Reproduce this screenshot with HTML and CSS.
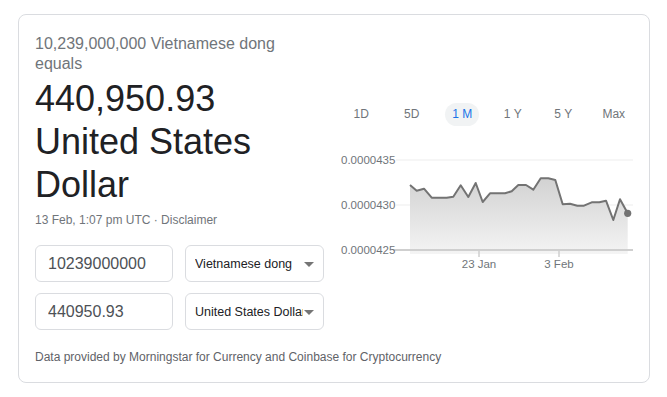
FILE: index.html
```html
<!DOCTYPE html>
<html lang="en">
<head>
    <meta charset="UTF-8">
    <meta name="viewport" content="width=device-width, initial-scale=1.0">
    <title>Currency converter</title>
    <link rel="stylesheet" href="styles.css">
</head>
<body>

    <!-- Karta przelicznika -->
    <div class="card">
        <div class="converter">
            <div class="left">
                <div class="source">10,239,000,000 Vietnamese dong equals</div>
                <div class="result">440,950.93 United States Dollar</div>
                <div class="stamp">13 Feb, 1:07 pm UTC · Disclaimer</div>

                <div class="row">
                    <input class="amount" type="text" value="10239000000">
                    <div class="currency"><span>Vietnamese dong</span></div>
                </div>
                <div class="row">
                    <input class="amount" type="text" value="440950.93">
                    <div class="currency"><span>United States Dollar</span></div>
                </div>
            </div>

            <!-- Wykres -->
            <div class="chart">
                <div class="tabs">
                    <div class="tab"><span>1D</span></div>
                    <div class="tab"><span>5D</span></div>
                    <div class="tab"><span class="active">1 M</span></div>
                    <div class="tab"><span>1 Y</span></div>
                    <div class="tab"><span>5 Y</span></div>
                    <div class="tab"><span>Max</span></div>
                </div>
                <svg class="plot" width="303" height="125" viewBox="336 148 303 125">
                    <defs>
                        <linearGradient id="fill" x1="0" y1="0" x2="0" y2="1">
                            <stop offset="0" stop-color="#d2d2d2"/>
                            <stop offset="1" stop-color="#f4f4f4"/>
                        </linearGradient>
                    </defs>
                    <line x1="396" y1="160" x2="633" y2="160" stroke="#f3f3f3" stroke-width="1.5"/>
                    <line x1="396" y1="205" x2="633" y2="205" stroke="#f3f3f3" stroke-width="1.5"/>
                    <polygon fill="url(#fill)" points="410,185 416.7,190.7 424,188.7 431.7,197.7 446.7,197.7 453.3,196.7 460.7,185.3 468.3,197 475.7,183 482.7,202 490,193.3 505,193.3 511.7,191.3 518.3,185 526,185 533.3,189.7 540.7,178.3 548.3,178.3 555.3,180 562.7,204.3 570,203.7 577.3,205.7 584,205.7 591.7,202.3 599.3,202.3 606,200.7 613.3,220 620,199.3 627.7,213.3 627.7,254 410,254"/>
                    <line x1="393" y1="250" x2="633" y2="250" stroke="#cfcfcf" stroke-width="2"/>
                    <line x1="479" y1="250" x2="479" y2="257" stroke="#cfcfcf" stroke-width="1.5"/>
                    <line x1="559" y1="250" x2="559" y2="257" stroke="#cfcfcf" stroke-width="1.5"/>
                    <polyline fill="none" stroke="#737373" stroke-width="2" stroke-linejoin="round" points="410,185 416.7,190.7 424,188.7 431.7,197.7 446.7,197.7 453.3,196.7 460.7,185.3 468.3,197 475.7,183 482.7,202 490,193.3 505,193.3 511.7,191.3 518.3,185 526,185 533.3,189.7 540.7,178.3 548.3,178.3 555.3,180 562.7,204.3 570,203.7 577.3,205.7 584,205.7 591.7,202.3 599.3,202.3 606,200.7 613.3,220 620,199.3 627.7,213.3"/>
                    <circle cx="627.7" cy="213.3" r="3.6" fill="#737373"/>
                    <text class="axis" x="341" y="164">0.0000435</text>
                    <text class="axis" x="341" y="209">0.0000430</text>
                    <text class="axis" x="341" y="254">0.0000425</text>
                    <text class="axis" x="479" y="268" text-anchor="middle">23 Jan</text>
                    <text class="axis" x="559" y="268" text-anchor="middle">3 Feb</text>
                </svg>
            </div>
        </div>

        <div class="footer">Data provided by Morningstar for Currency and Coinbase for Cryptocurrency</div>
    </div>

</body>
</html>
```

FILE: styles.css
```css
body {
    margin: 0;
    font-family: "Liberation Sans", Arial, sans-serif;
    background-color: #fff;
}

.card {
    box-sizing: border-box;
    width: 632px;
    height: 369px;
    margin: 14px 0 0 18px;
    padding: 19px 16px 0 16px;
    border: 1px solid #dadce0;
    border-radius: 8px;
}

.converter {
    display: flex;
}

.left {
    width: 289px;
}

.source {
    width: 275px;
    font-size: 16px;
    line-height: 20px;
    color: #70757a;
}

.result {
    margin-top: 3px;
    font-size: 36px;
    line-height: 43px;
    color: #202124;
}

.stamp {
    margin-top: 6px;
    font-size: 12px;
    line-height: 16px;
    color: #70757a;
}

.row {
    display: flex;
    gap: 12px;
    margin-top: 11px;
}

.stamp + .row {
    margin-top: 17px;
}

.amount {
    box-sizing: border-box;
    width: 138px;
    height: 37px;
    margin: 0;
    padding: 0 12px;
    border: 1px solid #dadce0;
    border-radius: 6px;
    font-family: inherit;
    font-size: 16px;
    color: #4d5156;
    outline: none;
}

.currency {
    box-sizing: border-box;
    position: relative;
    width: 139px;
    height: 37px;
    padding: 0 20px 0 9px;
    border: 1px solid #dadce0;
    border-radius: 6px;
    display: flex;
    align-items: center;
}

.currency span {
    white-space: nowrap;
    overflow: hidden;
    font-size: 12.5px;
    color: #202124;
}

/* strzałka listy */
.currency::after {
    content: "";
    position: absolute;
    right: 9px;
    top: 16px;
    border-left: 5px solid transparent;
    border-right: 5px solid transparent;
    border-top: 5px solid #757575;
}

.chart {
    width: 303px;
    margin-left: 12px;
}

.tabs {
    display: flex;
    height: 23px;
    margin-top: 69px;
}

.tab {
    flex: 1;
    display: flex;
    justify-content: center;
    align-items: center;
    font-size: 12px;
    color: #70757a;
}

.tab span {
    padding: 0 7px;
    line-height: 23px;
    border-radius: 12px;
}

.tab .active {
    background-color: #f1f3f4;
    color: #1a73e8;
}

.plot {
    display: block;
    margin-top: 22px;
}

.axis {
    font-family: "Liberation Sans", Arial, sans-serif;
    font-size: 11.5px;
    fill: #70757a;
}

.footer {
    margin-top: 19px;
    font-size: 12px;
    line-height: 16px;
    color: #5f6368;
}
```
